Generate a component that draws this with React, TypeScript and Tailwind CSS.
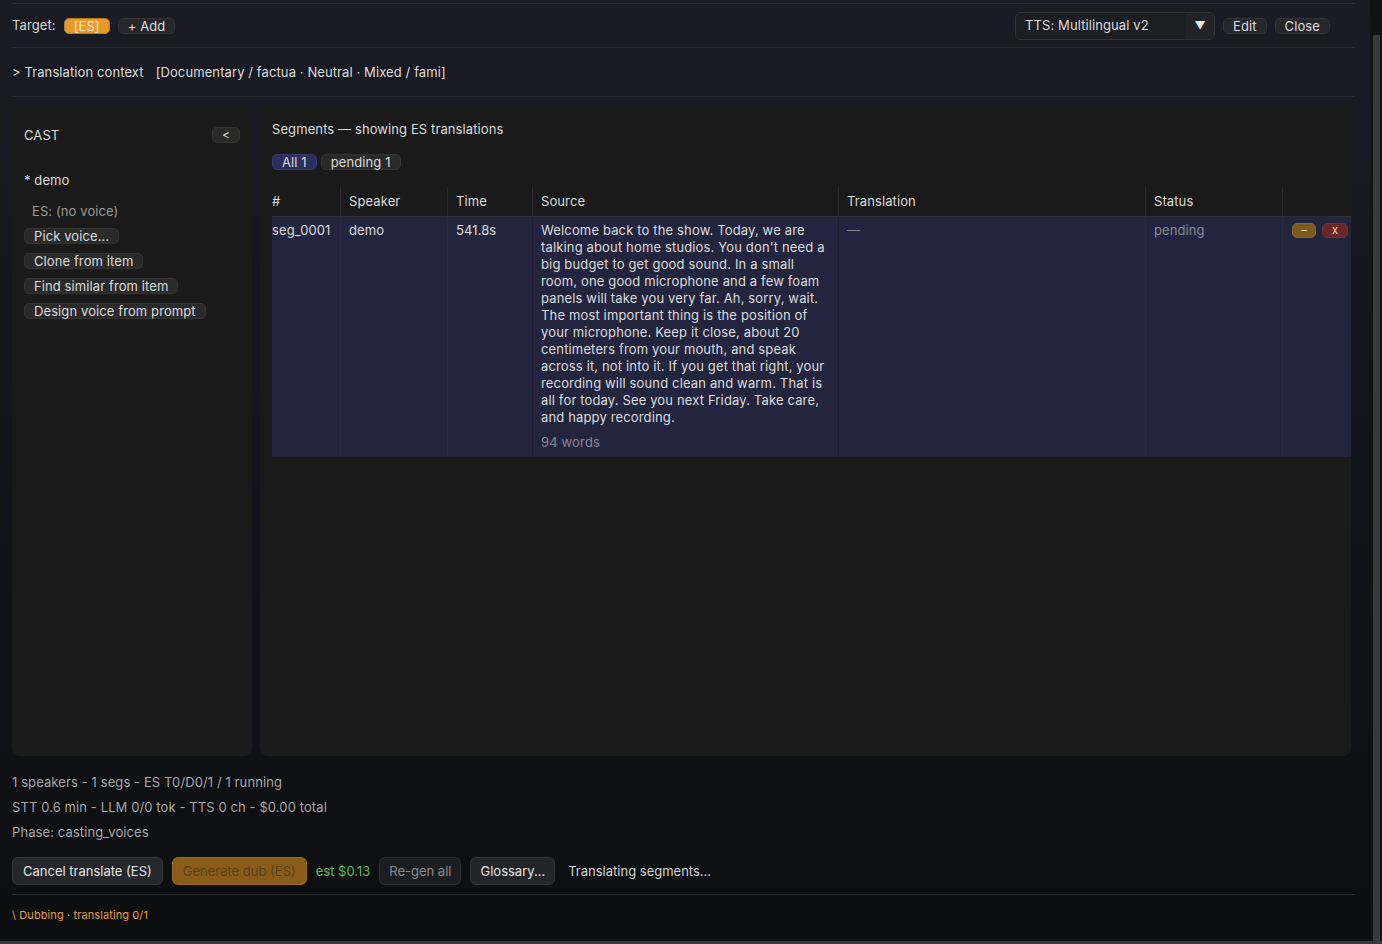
import React from "react";

const SOURCE_TEXT =
  "Welcome back to the show. Today, we are talking about home studios. You don't need a big budget to get good sound. In a small room, one good microphone and a few foam panels will take you very far. Ah, sorry, wait. The most important thing is the position of your microphone. Keep it close, about 20 centimeters from your mouth, and speak across it, not into it. If you get that right, your recording will sound clean and warm. That is all for today. See you next Friday. Take care, and happy recording.";

const castActions = ["Pick voice...", "Clone from item", "Find similar from item", "Design voice from prompt"];

function ChipButton({ children }: { children: React.ReactNode }) {
  return (
    <button className="h-4 px-[9px] rounded-[5px] bg-[#2a2a2b] border border-[#353536] text-[13px] leading-[14px] text-[#dcdcdc]">
      {children}
    </button>
  );
}

function CastPanel() {
  return (
    <div className="w-[240px] shrink-0 rounded-lg bg-[#1a1a1b] px-3 pt-[13px]">
      <div className="h-[34px] flex items-center justify-between">
        <span className="text-[#dcdcdc]">CAST</span>
        <button className="w-7 h-4 rounded-[5px] bg-[#2a2a2b] border border-[#353536] text-[12px] leading-[12px] text-[#dcdcdc]">
          &lt;
        </button>
      </div>
      <div className="mt-[20px] text-[#dcdcdc]">* demo</div>
      <div className="mt-[14px] pl-2 text-[#9a9a9a]">ES: (no voice)</div>
      <div className="mt-[8px] flex flex-col items-start gap-[9px]">
        {castActions.map((a) => (
          <ChipButton key={a}>{a}</ChipButton>
        ))}
      </div>
    </div>
  );
}

function SegmentsTable() {
  const head = ["#", "Speaker", "Time", "Source", "Translation", "Status", ""];
  const cols = "grid grid-cols-[68px_107px_85px_306px_307px_137px_1fr]";
  return (
    <div className="mt-[17px]">
      {/* header */}
      <div className={`${cols} h-[30px] border-b border-[#2e2e30]`}>
        {head.map((h, i) => (
          <div
            key={i}
            className={`flex items-center text-[#dcdcdc] ${i === 0 ? "" : "pl-2 border-l border-[#2a2a2c]"}`}
          >
            {h}
          </div>
        ))}
      </div>
      {/* single segment row */}
      <div className={`${cols} bg-[#23253f]`}>
        <div className="pt-[5px] text-[#dcdcdc]">seg_0001</div>
        <div className="pt-[5px] pl-2 border-l border-[#2a2b40] text-[#dcdcdc]">demo</div>
        <div className="pt-[5px] pl-2 border-l border-[#2a2b40] text-[#dcdcdc]">541.8s</div>
        <div className="pt-[5px] pb-[6px] px-2 border-l border-[#1c1d30] tracking-[0.15px]">
          <p className="text-[#dcdcdc]">{SOURCE_TEXT}</p>
          <p className="mt-2 text-[#8a8a92]">94 words</p>
        </div>
        <div className="pt-[5px] pl-2 border-l border-[#1c1d30] text-[#8a8a92]">—</div>
        <div className="pt-[5px] pl-2 border-l border-[#2a2b40] text-[#8a8a92]">pending</div>
        <div className="pt-[6px] pl-[9px] border-l border-[#2a2b40] flex items-start gap-[6px]">
          <button className="w-6 h-[15px] rounded-[5px] bg-[#7c5a1f] border border-[#8c6724] text-[11px] leading-[11px] text-[#f0e0c0]">
            –
          </button>
          <button className="w-[26px] h-[15px] rounded-[5px] bg-[#6a2727] border border-[#7a2f2f] text-[11px] leading-[11px] text-[#f0d0d0]">
            x
          </button>
        </div>
      </div>
    </div>
  );
}

function SegmentsPanel() {
  return (
    <div className="flex-1 min-w-0 overflow-hidden rounded-lg bg-[#1a1a1b] pl-3 pt-4">
      <div className="text-[#dcdcdc]">Segments — showing ES translations</div>
      <div className="mt-[16px] flex gap-1">
        <button className="h-4 px-[9px] rounded-[5px] bg-[#2c2f5e] border border-[#363a6e] text-[13px] leading-[14px] text-[#dcdcdc]">
          All 1
        </button>
        <ChipButton>pending 1</ChipButton>
      </div>
      <SegmentsTable />
    </div>
  );
}

export default function App() {
  return (
    <div
      className="relative h-[944px] w-full flex overflow-hidden bg-gradient-to-b from-[#1a1b25] via-[#131419] to-[#0d0e10] text-[13px] leading-[17px] tracking-[0.1px]"
      style={{ fontFamily: "Inter, 'Noto Sans', sans-serif" }}
    >
      <div className="flex-1 flex flex-col pl-3 pr-[15px] pt-[3px]">
        {/* top bar */}
        <div className="h-[45px] border-t border-b border-[#2a2b33] flex items-center">
          <span className="text-[#dcdcdc]">Target:</span>
          <span className="ml-2 h-4 px-[9px] rounded-[5px] bg-[#e89a2c] border border-[#b97a22] text-[13px] leading-[14px] text-[#fbe6c4]">
            [ES]
          </span>
          <button className="ml-2 h-4 px-[9px] rounded-[5px] bg-[#26272c] border border-[#33343a] text-[13px] leading-[14px] text-[#dcdcdc]">
            + Add
          </button>
          <div className="ml-auto flex items-center">
            <div className="w-[200px] h-7 flex rounded-md border border-[#34353b] bg-[#1d1e23] overflow-hidden">
              <span className="flex-1 pl-[9px] flex items-center text-[#dcdcdc]">TTS: Multilingual v2</span>
              <span className="w-7 flex items-center justify-center bg-[#222328] text-[#e8e8e8] text-[11px]">▼</span>
            </div>
            <button className="ml-2 h-4 px-[9px] rounded-[5px] bg-[#26272c] border border-[#33343a] text-[13px] leading-[14px] text-[#dcdcdc]">
              Edit
            </button>
            <button className="ml-2 mr-[25px] h-4 px-[9px] rounded-[5px] bg-[#26272c] border border-[#33343a] text-[13px] leading-[14px] text-[#dcdcdc]">
              Close
            </button>
          </div>
        </div>

        {/* translation context */}
        <div className="h-[49px] border-b border-[#2a2b33] flex items-center text-[#dcdcdc]">
          <span>&gt; Translation context</span>
          <span className="ml-3">[Documentary / factua · Neutral · Mixed / fami]</span>
        </div>

        {/* main panels */}
        <div className="mt-2 h-[651px] flex gap-2 pr-1">
          <CastPanel />
          <SegmentsPanel />
        </div>

        {/* stats */}
        <div className="mt-[17px] pt-px flex flex-col gap-2 text-[#a6a6a8]">
          <div>1 speakers - 1 segs - ES T0/D0/1 / 1 running</div>
          <div>STT 0.6 min - LLM 0/0 tok - TTS 0 ch - $0.00 total</div>
          <div>Phase: casting_voices</div>
        </div>

        {/* actions */}
        <div className="mt-4 h-7 flex items-center gap-[9px] tracking-normal">
          <button className="h-7 px-[10px] rounded-md bg-[#26272a] border border-[#37383b] text-[#e4e4e4]">
            Cancel translate (ES)
          </button>
          <button className="h-7 px-[10px] rounded-md bg-[#8a5c1a] border border-[#986820] text-[#5a3d12]">
            Generate dub (ES)
          </button>
          <span className="text-[#5cb85c]">est $0.13</span>
          <button className="h-7 px-[9px] rounded-md bg-[#1c1d20] border border-[#2e2f32] text-[#8c8c8e]">
            Re-gen all
          </button>
          <button className="h-7 px-[9px] rounded-md bg-[#242528] border border-[#34353a] text-[#e4e4e4]">
            Glossary...
          </button>
          <span className="ml-1 text-[#d4d4d6]">Translating segments...</span>
        </div>

        <div className="mt-[9px] border-t border-[#2a2b2e]" />
        <div className="mt-[13px] text-[11px] leading-[15px] text-[#e39a42]">\ Dubbing · translating 0/1</div>
        <div className="flex-1" />
      </div>

      {/* scrollbar */}
      <div className="w-3 shrink-0 flex flex-col bg-[#111215]">
        <div className="h-[35px]" />
        <div className="ml-[3px] w-[7px] flex-1 bg-[#3a3a3b]" />
        <div className="h-[3px]" />
      </div>
      <div className="absolute left-0 right-0 bottom-0 h-[3px] bg-[#39393a]" />
    </div>
  );
}
